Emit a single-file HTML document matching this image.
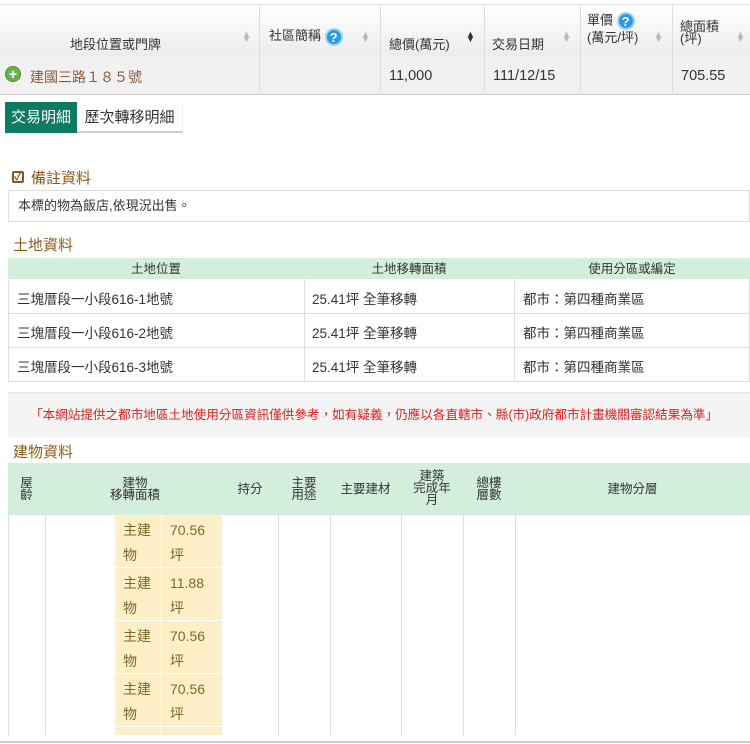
<!DOCTYPE html>
<html><head><meta charset="utf-8"><style>
*{margin:0;padding:0;box-sizing:border-box}
body{width:750px;height:744px;background:#fff;font-family:"Liberation Sans","Noto Sans CJK TC",sans-serif;color:#333;position:relative;overflow:hidden}
.a{position:absolute}
.hd{font-size:13px;color:#333}
.sort{position:absolute;color:#bbb;font-size:9px;line-height:5px}
.q{display:inline-block;width:18px;height:18px;border-radius:50%;background:#2a9be0;color:#fff;font-size:13px;font-weight:bold;text-align:center;line-height:15px;border:2px solid #9fd3f3;vertical-align:middle}
.vl{position:absolute;width:1px;background:#ddd}
.gh{font-size:12.5px;color:#333;text-align:center;line-height:12px}
.yc{position:absolute;background:#fdf0c8;color:#7a6a2a;font-size:14px;line-height:25px;padding:3px 8px}
.title{position:absolute;color:#8a5a1a;font-size:15px}
.td{position:absolute;font-size:13.5px}
</style></head><body>
<div class="a" style="left:0;top:4px;width:750px;height:53px;background:linear-gradient(#fff,#ececec);border-top:1px solid #ddd"></div>
<div class="a" style="left:0;top:57px;width:750px;height:38px;background:#f1f1f1;border-bottom:1px solid #ccc"></div>
<div class="vl" style="left:259px;top:5px;height:90px"></div>
<div class="vl" style="left:380px;top:5px;height:90px"></div>
<div class="vl" style="left:484px;top:5px;height:90px"></div>
<div class="vl" style="left:580px;top:5px;height:90px"></div>
<div class="vl" style="left:672px;top:5px;height:90px"></div>
<div class="a hd" style="left:70px;top:34px">地段位置或門牌</div>
<div class="sort" style="left:242px;top:32px">▲<br>▼</div>
<div class="a hd" style="left:269px;top:25px">社區簡稱 <span class="q">?</span></div>
<div class="sort" style="left:361px;top:32px">▲<br>▼</div>
<div class="a hd" style="left:389px;top:34px">總價(萬元)</div>
<div class="sort" style="left:466px;top:32px;color:#333">▲<br>▼</div>
<div class="a hd" style="left:492px;top:34px">交易日期</div>
<div class="sort" style="left:562px;top:32px">▲<br>▼</div>
<div class="a hd" style="left:587px;top:12px;line-height:15px">單價 <span class="q">?</span><br>(萬元/坪)</div>
<div class="sort" style="left:654px;top:32px">▲<br>▼</div>
<div class="a hd" style="left:680px;top:21px;line-height:12px">總面積<br>(坪)</div>
<div class="sort" style="left:736px;top:32px">▲<br>▼</div>
<div class="a" style="left:5px;top:66px;width:16px;height:16px;border-radius:50%;background:#6ab04c;color:#fff;font-size:14px;font-weight:bold;text-align:center;line-height:15px;border:1px solid #4a8a30">+</div>
<div class="a" style="left:30px;top:67px;font-size:14px;color:#8a5a3a">建國三路１８５號</div>
<div class="a" style="left:389px;top:68px;font-size:14.5px">11,000</div>
<div class="a" style="left:493px;top:68px;font-size:14.5px">111/12/15</div>
<div class="a" style="left:681px;top:68px;font-size:14.5px">705.55</div>
<div class="a" style="left:5px;top:102px;width:72px;height:31px;background:#0e7a62;color:#fff;font-size:15px;line-height:31px;text-align:center">交易明細</div>
<div class="a" style="left:77px;top:102px;width:106px;height:31px;background:#fff;border-bottom:2px solid #ccc;border-right:1px solid #eee;color:#333;font-size:15px;line-height:31px;text-align:center">歷次轉移明細</div>
<div class="a" style="left:12px;top:171px;width:12px;height:12px;border:2px solid #8a5a1a;border-radius:2px;color:#8a5a1a;font-size:11px;line-height:8px;font-weight:bold;text-align:center">✓</div>
<div class="title" style="left:31px;top:167px">備註資料</div>
<div class="a" style="left:8px;top:190px;width:742px;height:32px;border:1px solid #ddd;font-size:13px;line-height:30px;padding-left:9px">本標的物為飯店,依現況出售。</div>
<div class="title" style="left:13px;top:234px">土地資料</div>
<div class="a" style="left:8px;top:258px;width:742px;height:21px;background:#d4eedd"></div>
<div class="a gh" style="left:8px;top:263px;width:296px">土地位置</div>
<div class="a gh" style="left:304px;top:263px;width:210px">土地移轉面積</div>
<div class="a gh" style="left:514px;top:263px;width:236px">使用分區或編定</div>
<div class="a" style="left:8px;top:279px;width:742px;height:103px;border:1px solid #ddd;border-top:none"></div>
<div class="a" style="left:8px;top:313px;width:742px;height:1px;background:#ddd"></div>
<div class="a" style="left:8px;top:347px;width:742px;height:1px;background:#ddd"></div>
<div class="vl" style="left:304px;top:279px;height:103px"></div>
<div class="vl" style="left:514px;top:279px;height:103px"></div>
<div class="td" style="left:17px;top:288px">三塊厝段一小段616-1地號</div>
<div class="td" style="left:17px;top:322px">三塊厝段一小段616-2地號</div>
<div class="td" style="left:17px;top:356px">三塊厝段一小段616-3地號</div>
<div class="td" style="left:312px;top:288px">25.41坪 全筆移轉</div>
<div class="td" style="left:312px;top:322px">25.41坪 全筆移轉</div>
<div class="td" style="left:312px;top:356px">25.41坪 全筆移轉</div>
<div class="td" style="left:523px;top:288px">都市：第四種商業區</div>
<div class="td" style="left:523px;top:322px">都市：第四種商業區</div>
<div class="td" style="left:523px;top:356px">都市：第四種商業區</div>
<div class="a" style="left:8px;top:392px;width:742px;height:45px;background:#f4f4f4;border-top:2px solid #eaeaea;color:#e02020;font-size:12.7px;line-height:42px;padding-left:22px;white-space:nowrap;letter-spacing:-0.1px">「本網站提供之都市地區土地使用分區資訊僅供參考，如有疑義，仍應以各直轄市、縣(市)政府都市計畫機關審認結果為準」</div>
<div class="title" style="left:13px;top:441px">建物資料</div>
<div class="a" style="left:8px;top:463px;width:742px;height:52px;background:#d4eedd"></div>
<div class="a gh" style="left:8px;top:477px;width:37px">屋<br>齡</div>
<div class="a gh" style="left:100px;top:477px;width:70px">建物<br>移轉面積</div>
<div class="a gh" style="left:222px;top:483px;width:56px">持分</div>
<div class="a gh" style="left:278px;top:477px;width:52px">主要<br>用途</div>
<div class="a gh" style="left:330px;top:483px;width:71px">主要建材</div>
<div class="a gh" style="left:401px;top:470px;width:62px">建築<br>完成年<br>月</div>
<div class="a gh" style="left:463px;top:477px;width:52px">總樓<br>層數</div>
<div class="a gh" style="left:515px;top:483px;width:235px">建物分層</div>
<div class="vl" style="left:8px;top:515px;height:220px"></div>
<div class="vl" style="left:45px;top:515px;height:220px"></div>
<div class="vl" style="left:278px;top:515px;height:220px"></div>
<div class="vl" style="left:330px;top:515px;height:220px"></div>
<div class="vl" style="left:401px;top:515px;height:220px"></div>
<div class="vl" style="left:463px;top:515px;height:220px"></div>
<div class="vl" style="left:515px;top:515px;height:220px"></div>
<div class="yc" style="left:115px;top:515px;width:46px;height:52px">主建<br>物</div><div class="yc" style="left:162px;top:515px;width:60px;height:52px">70.56<br>坪</div>
<div class="yc" style="left:115px;top:568px;width:46px;height:52px">主建<br>物</div><div class="yc" style="left:162px;top:568px;width:60px;height:52px">11.88<br>坪</div>
<div class="yc" style="left:115px;top:621px;width:46px;height:52px">主建<br>物</div><div class="yc" style="left:162px;top:621px;width:60px;height:52px">70.56<br>坪</div>
<div class="yc" style="left:115px;top:674px;width:46px;height:52px">主建<br>物</div><div class="yc" style="left:162px;top:674px;width:60px;height:52px">70.56<br>坪</div>
<div class="yc" style="left:115px;top:727px;width:46px;height:8px;padding:0"></div><div class="yc" style="left:162px;top:727px;width:60px;height:8px;padding:0"></div>
<div class="a" style="left:0;top:741px;width:750px;height:2px;background:#ccc"></div>
</body></html>
